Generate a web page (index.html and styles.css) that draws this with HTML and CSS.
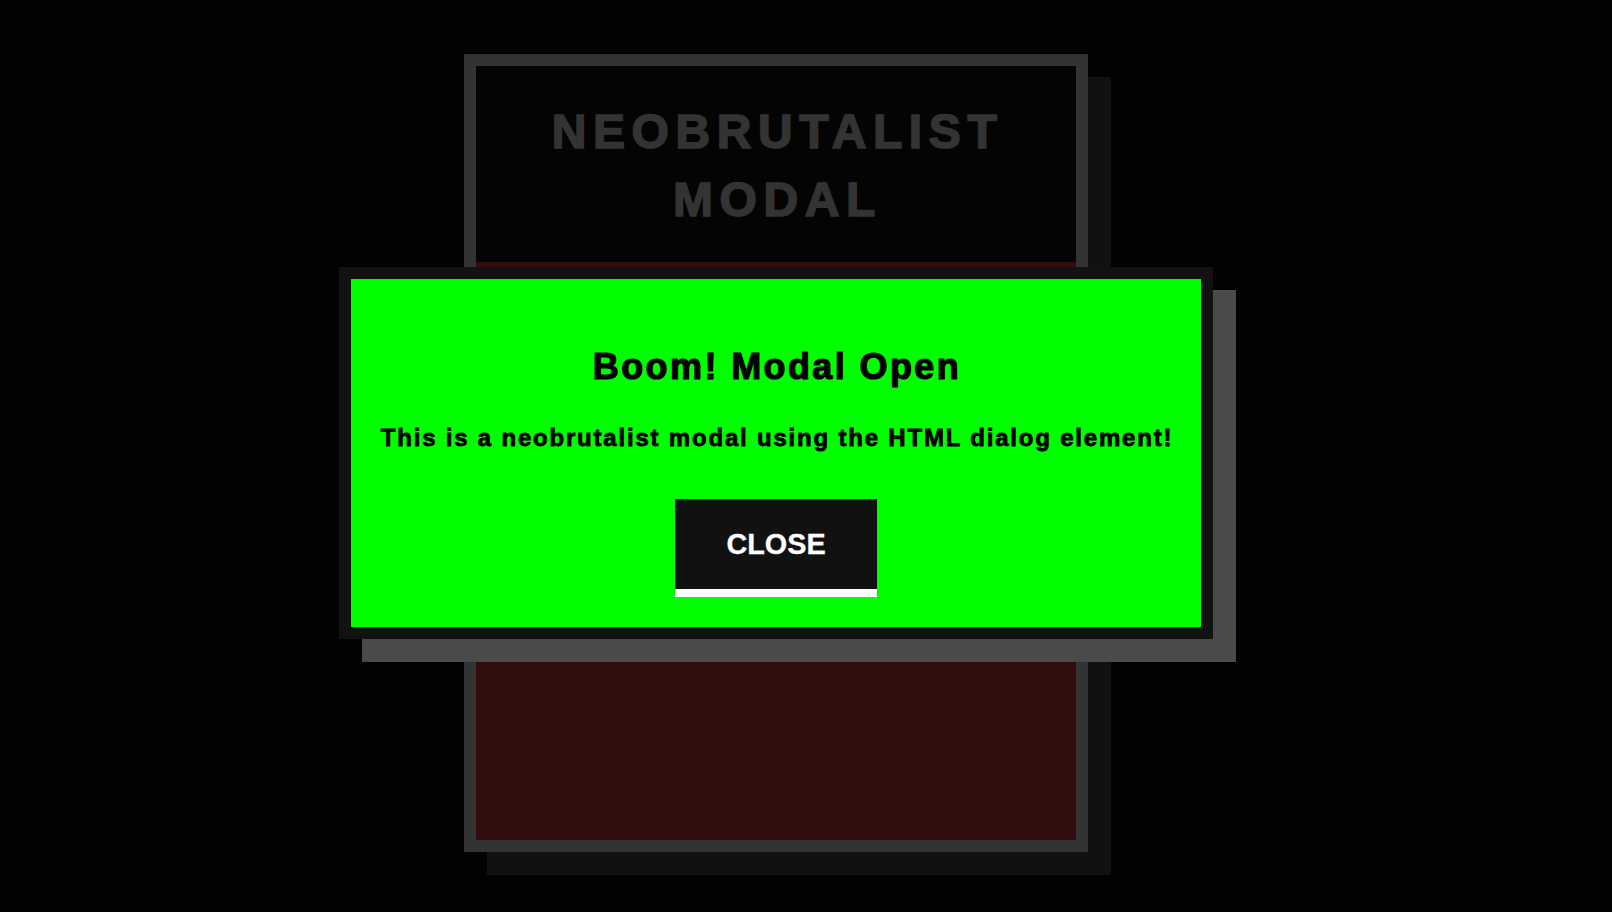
FILE: index.html
```html
<!DOCTYPE html>
<html lang="en">
<head>
<meta charset="utf-8">
<title>Neobrutalist Modal</title>
<link rel="stylesheet" href="styles.css">
</head>
<body>
<main class="stage">
  <section class="card">
    <header class="card-head">
      <h1 class="card-title">NEOBRUTALIST<br>MODAL</h1>
    </header>
    <div class="card-body"></div>
  </section>
  <div class="modal" role="dialog" aria-modal="true">
    <h2 class="modal-title">Boom! Modal Open</h2>
    <p class="modal-text">This is a neobrutalist modal using the HTML dialog element!</p>
    <button class="close-btn" type="button">CLOSE</button>
  </div>
</main>
</body>
</html>
```

FILE: styles.css
```css
* { box-sizing: border-box; }
html, body { margin: 0; padding: 0; }
body {
  background: #020202;
  font-family: "Liberation Sans", Arial, sans-serif;
  overflow: hidden;
}
.stage {
  display: grid;
  place-items: center;
  min-height: 912px;
  padding: 0 60px 6px 0;
}
.card, .modal { grid-area: 1 / 1; }
.card {
  width: 624px;
  height: 798px;
  border: 12px solid #333333;
  background: #040404;
  box-shadow: 23px 23px 0 #111111;
  display: flex;
  flex-direction: column;
}
.card-head {
  padding: 32px 0 28px;
  text-align: center;
}
.card-title {
  margin: 0;
  font-size: 48px;
  line-height: 68px;
  font-weight: 700;
  letter-spacing: 6.6px;
  padding-left: 3px;
  color: #333333;
  -webkit-text-stroke: 1.6px #333333;
}
.card-body {
  flex: 1;
  background: #320d0d;
}
.modal {
  z-index: 1;
  width: 874px;
  border: 12px solid #121212;
  background: #00ff00;
  box-shadow: 23px 23px 0 #4a4a4a;
  padding: 68px 30px 30px;
  display: flex;
  flex-direction: column;
  align-items: center;
  text-align: center;
  color: #000;
}
.modal-title {
  margin: 0;
  font-size: 36px;
  line-height: 40px;
  font-weight: 700;
  letter-spacing: 2.4px;
  padding-left: 2px;
  -webkit-text-stroke: 1.2px #000;
}
.modal-text {
  margin: 37px 0 0;
  font-size: 24px;
  line-height: 28px;
  font-weight: 700;
  letter-spacing: 1.8px;
  padding-left: 2px;
  white-space: nowrap;
  -webkit-text-stroke: 0.8px #000;
}
.close-btn {
  margin-top: 47px;
  width: 202px;
  height: 98px;
  background: #111111;
  color: #ffffff;
  border: 0;
  border-bottom: 8px solid #ffffff;
  font-family: "Liberation Sans", Arial, sans-serif;
  font-weight: 700;
  font-size: 28.8px;
  padding: 0;
  cursor: pointer;
  -webkit-text-stroke: 0.3px #ffffff;
}
```
